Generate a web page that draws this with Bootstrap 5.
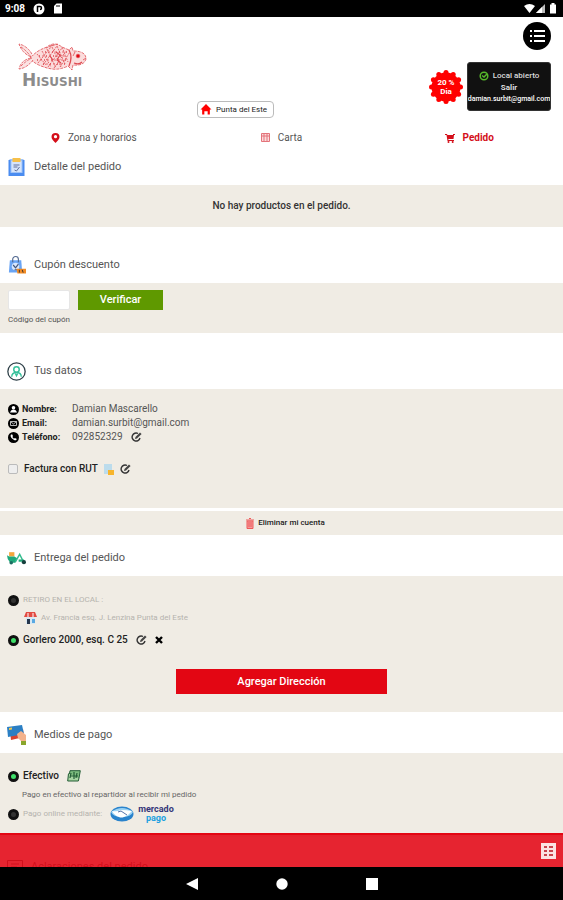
<!DOCTYPE html>
<html lang="es">
<head>
<meta charset="utf-8">
<meta name="viewport" content="width=device-width, initial-scale=1">
<title>Hisushi - Pedido</title>
<link href="https://cdn.jsdelivr.net/npm/bootstrap@5.3.0/dist/css/bootstrap.min.css" rel="stylesheet">
<style>
body{font-family:Roboto,"Liberation Sans",sans-serif;font-size:10px;line-height:14px;color:#555;background:#fff}
svg{display:block;flex:none}
a{color:inherit;text-decoration:none}
.status{height:17px;background:#000;color:#fff;font-size:10px;padding:0 5px}
.brand-col{flex:0 0 35%;padding:25px 0 0 16px}
.brand-name{font-family:"DejaVu Sans",sans-serif;font-size:17px;line-height:14px;font-weight:700;color:#8c8c8c;font-variant:small-caps;padding-left:6px}
.place{border:1px solid #bbb;border-radius:4px;font-size:8px;line-height:15px;padding:0 6px 0 2px;color:#222;background:#fff}
.tools{padding:5px 12px 7px 0}
.menu-btn{width:28px;height:28px;border-radius:50%;background:#000;border:0;padding:0}
.promo{width:34px;height:34px;position:relative;color:#fff;font-size:8px;line-height:9px;font-weight:700;text-align:center}
.promo svg{position:absolute;inset:0}
.promo span{position:relative}
.account{width:84px;height:49px;background:#111;border:1px solid #333;border-radius:3px;color:#ddd;font-size:8px;line-height:12px;padding-top:7px;overflow:hidden}
.account .mail{font-size:7px;line-height:10px;font-weight:500;color:#fff}
.tabs-row{height:31px;padding-top:8px}
.tab-on{color:#d40f1a}
.sec-title{height:36px;padding:0 7px;font-size:11px;line-height:16px;font-weight:400;margin:0;color:#555}
.panel{background:#f0ece4}
.gap-lg{margin-top:20px}
.gap-sm{margin-top:5px}
.empty-note{padding:14px 0;font-weight:500;color:#333}
.coupon{padding:7px 8px}
.coupon input{width:62px;height:20px;border:1px solid #e6e6e6;border-radius:2px;padding:0 4px}
.coupon label{font-size:8px;line-height:12px;margin-top:4px;color:#555}
.btn-check-code{width:85px;height:20px;border:0;background:#5f9900;color:#fff;font-size:11px;font-weight:500;padding:0}
.user-data{padding:13px 8px 32px}
.user-data .me-1{margin-right:3px!important}
.k{width:64px;font-size:9px;font-weight:700;color:#222}
.bold-line{font-weight:500;color:#222}
.bill{margin-top:18px;gap:6px}
.bill input{width:10px;height:10px;margin:0;appearance:none;border:1px solid #bbb;border-radius:2px;background:#eee}
.remove-row{border-top:3px solid #fff;height:27px;font-size:8px;font-weight:500;color:#222}
.delivery{padding:15px 8px 18px}
.opt{width:11px;height:11px;margin:0;appearance:none;border:3px solid #111;border-radius:50%;background:#333;flex:none}
.opt:checked{background:#3fe06a}
.faded{color:#b5b3ae;font-size:8px}
.line18{min-height:18px}
.icon-btn{border:0;background:none;padding:0}
.btn-address{width:211px;height:25px;border:0;background:#e30613;color:#fff;font-size:11px;font-weight:500;margin-top:20px;padding:0}
.pay{padding:14px 8px}
.pay-rows{gap:1px}
.note{font-size:8px;padding-left:14px;color:#666}
.pay-logo{font-size:9px;line-height:9px;font-weight:700;color:#343779;text-align:center}
.pay-logo span{display:block}
.pay-logo .second{color:#1ba0e0}
.last{margin-top:12px}
.cart-bar{height:34px;background:rgba(227,6,19,.88);border-top:2px solid #e30613;padding-right:7px}
.sys-nav{height:33px;background:#000;gap:78px}
</style>
<script src="https://cdn.jsdelivr.net/npm/bootstrap@5.3.0/dist/js/bootstrap.bundle.min.js"></script>
</head>
<body>
<svg width="0" height="0" class="position-absolute">
  <defs>
    <g id="edit"><path d="M7 1.500A4 4 0 1 0 9 6" fill="none" stroke="#333" stroke-width="1.400"/><path d="M4 7l.5-2L9 .6 10.600 2 6 6.600z" fill="#444"/></g>
  </defs>
</svg>

<div class="status d-flex align-items-center">
  <span class="fw-bold">9:08</span>
  <svg class="ms-2" width="12" height="12" viewBox="0 0 12 12"><circle cx="6" cy="6" r="5.500" fill="#fff"/><path d="M4.500 9V3.500H7A1.500 1.500 0 0 1 7 6.500" fill="none" stroke="#000" stroke-width="1.500"/></svg>
  <svg class="ms-2" width="10" height="11" viewBox="0 0 10 11"><path d="M3.500.5H9v10H1V3z" fill="#fff"/><path d="M4 2v2M6 2v2" stroke="#000"/></svg>
  <svg class="ms-auto" width="34" height="11" viewBox="0 0 34 11"><path d="M0 3q5.500-4 11 0L5.500 10z" fill="#fff"/><path d="M21 1v9H12z" fill="#bbb"/><path d="M18 4v6h-6z" fill="#fff"/><path d="M26 1.500h1.500V0h3v1.500H32v9h-6z" fill="#fff"/></svg>
</div>

<header class="d-flex">
  <div class="brand-col">
    <svg width="74" height="31" viewBox="0 0 74 31" fill="none" stroke="#de4a51" stroke-width=".8">
      <path d="M15 15C22 8 26 7 31 5Q38-1 46 5l7 3 3-3 1 4q13 0 13 8-2 7-13 6l-1 5-4-4q-8 4-16 3l-5-1-6-2q-7-3-11-7z" fill="#fbdcdc" stroke-dasharray="3 1"/>
      <path d="M15 15Q6 11 3 2q9 2 14 12M15 16Q5 18 3 27q8-1 14-9M5 5q6 4 10 10M5 24q5-5 11-8" fill="#fbe3e3" stroke-dasharray="3 1"/>
      <path d="M21 12l9 11M26 9l9 16M31 7l9 19M36 5l9 20M41 4l8 18M46 5l6 15M22 21L35 5M27 23L41 4M32 25L46 6M38 26L50 9M44 25l10-15M30 6l8-3M34 4l8-2" stroke-dasharray="2 1"/>
      <path d="M23 14h28M21 18h31M27 22h23M29 10h24" stroke-width="1.300" stroke-dasharray="1 2.500"/>
      <path d="M40 10l4 3-3 5 4 3M53 8q4 7 0 16M34 14l3 4M58 21q5 2 8-1" stroke-width="1.200"/>
      <circle cx="62" cy="14" r="1.800" fill="#e30613"/><path d="M57 14l2-4M67 18l3-2"/>
    </svg>
    <div class="brand-name">Hisushi</div>
  </div>
  <a href="#" class="place d-flex align-items-center gap-1 align-self-end"><svg width="12" height="11" viewBox="0 0 10 10"><path d="M5 0l5 5H8.500v4.500h-2V6.500h-3v3h-2V5H0z" fill="#f00"/></svg>Punta del Este</a>
  <div class="tools ms-auto d-flex flex-column align-items-end">
    <button class="menu-btn d-flex align-items-center justify-content-center" aria-label="Menú"><svg width="16" height="14" viewBox="0 0 16 14" stroke="#fff" stroke-width="2"><path d="M5 2h11M5 7h11M5 12h11M1 2h2M1 7h2M1 12h2"/></svg></button>
    <div class="d-flex align-items-center gap-1 mt-2 pt-1">
      <div class="promo d-flex align-items-center justify-content-center"><svg width="34" height="34" viewBox="-17 -17 34 34"><g fill="#f00"><circle r="14.500"/><g id="q"><circle cx="14.500" r="2.500"/><circle cx="12.600" cy="7.200" r="2.500"/><circle cx="7.200" cy="12.600" r="2.500"/></g><use href="#q" transform="rotate(90)"/><use href="#q" transform="rotate(180)"/><use href="#q" transform="rotate(270)"/></g></svg><span>20 %<br>Dia</span></div>
      <div class="account text-center">
        <div class="d-flex justify-content-center align-items-center"><svg width="10" height="10" viewBox="0 0 10 10" fill="none" stroke="#55b82a" stroke-width="1.500"><circle cx="5" cy="5" r="3.800"/><path d="M3 4.500l2 1.500 3-3"/></svg><span class="ms-1 fw-medium">Local abierto</span></div>
        <a href="#" class="d-block fw-bold">Salir</a>
        <div class="mail d-flex justify-content-center">damian.surbit@gmail.com</div>
      </div>
    </div>
  </div>
</header>

<nav class="tabs-row row g-0 text-center">
  <a href="#" class="col d-flex justify-content-center align-items-center gap-2"><svg width="9" height="10" viewBox="0 0 9 10"><path d="M4.500 0A4 4 0 0 0 .5 4c0 2 2 4 4 6 2-2 4-4 4-6a4 4 0 0 0-4-4z" fill="#d40f1a"/><circle cx="4.500" cy="3.700" r="1.600" fill="#fff"/></svg>Zona y horarios</a>
  <a href="#" class="col d-flex justify-content-center align-items-center gap-2"><svg width="9" height="9" viewBox="0 0 9 9" fill="#fbdcdc" stroke="#e4737a"><path d="M.5.5h8v8h-8zM3 1v7M6 1v7M1 3h7"/></svg>Carta</a>
  <a href="#" class="tab-on col d-flex justify-content-center align-items-center gap-2" aria-current="page"><svg width="10" height="10" viewBox="0 0 10 10" fill="#d40f1a"><path d="M0 1h2l.4 1H9L8.500 6H3.300l.2 1H9v1H2.500L1.500 2H0zM8 1h2v1H8z"/><circle cx="3.500" cy="9" r="1"/><circle cx="7.700" cy="9" r="1"/></svg><span class="fw-bold">Pedido</span></a>
</nav>

<main>
  <h2 class="sec-title d-flex align-items-center gap-2"><svg width="19" height="20" viewBox="0 0 18 20"><path d="M2 2h14v16H2z" fill="#9fc3f7"/><path d="M1 3h2v13h12V3h2v16H1z" fill="#4a8cf0"/><path d="M4 4h10v11H4z" fill="#d5e4fb"/><path d="M5 1h8v4H5z" fill="#f6c04a"/><path d="M6 8h6M6 10h4M7 13l2 1 3-4" stroke="#63719b" fill="none"/></svg>Detalle del pedido</h2>
  <section class="panel"><p class="empty-note text-center mb-0">No hay productos en el pedido.</p></section>

  <h2 class="sec-title gap-lg d-flex align-items-center gap-2"><svg width="19" height="20" viewBox="0 0 20 20"><path d="M3 5h12l1 13H2z" fill="#69a4f4"/><path d="M6 7V4a3 3 0 0 1 6 0v3" fill="none" stroke="#536a91" stroke-width="1.200"/><circle cx="9" cy="11.500" r="4" fill="#d8e7fc"/><path d="M6.500 10l2.500 3 3-4M8 15h3" stroke="#45577d" fill="none" stroke-width="1.300"/><path d="M10 14h10v5H11z" fill="#f28b24"/><path d="M13 15v3M16 15l1 3" stroke="#333"/></svg>Cupón descuento</h2>
  <section class="panel coupon">
    <div class="d-flex gap-2"><input type="text" id="code"><button class="btn-check-code">Verificar</button></div>
    <label for="code" class="d-block">Código del cupón</label>
  </section>

  <h2 class="sec-title gap-lg d-flex align-items-center gap-2"><svg width="19" height="19" viewBox="0 0 18 18" fill="none"><circle cx="9" cy="9" r="8.200" stroke="#2c3e46" stroke-width="1.200"/><circle cx="9" cy="7" r="2.600" stroke="#36c19b" stroke-width="1.400"/><path d="M4.500 14q0-4 4.500-4t4.500 4M8 11l1 2 1-2" stroke="#36c19b" stroke-width="1.300"/></svg>Tus datos</h2>
  <section class="panel">
    <div class="user-data">
      <div class="d-flex align-items-center"><div class="k d-flex align-items-center"><svg class="me-1" width="11" height="11" viewBox="0 0 11 11"><circle cx="5.500" cy="5.500" r="5.500"/><circle cx="5.500" cy="3.800" r="1.800" fill="#fff"/><path d="M2 8.500q1-3 3.500-3t3.500 3z" fill="#fff"/></svg>Nombre:</div>Damian Mascarello</div>
      <div class="d-flex align-items-center"><div class="k d-flex align-items-center"><svg class="me-1" width="11" height="11" viewBox="0 0 11 11"><circle cx="5.500" cy="5.500" r="5.500"/><path d="M2.500 3.500h6v4h-6zM2.500 3.500l3 2.500 3-2.500" fill="none" stroke="#ccc" stroke-width=".9"/></svg>Email:</div>damian.surbit@gmail.com</div>
      <div class="d-flex align-items-center"><div class="k d-flex align-items-center"><svg class="me-1" width="11" height="11" viewBox="0 0 11 11"><circle cx="5.500" cy="5.500" r="5.500"/><path d="M3 2.500l1.300 0 .7 1.700-.7.8 1.700 1.700.8-.7 1.700.8v1q-1 1-2.800 0Q2.800 6 2.500 4z" fill="#fff"/></svg>Teléfono:</div>092852329<button class="icon-btn ms-2" aria-label="Editar teléfono"><svg width="11" height="11" viewBox="0 0 11 11"><use href="#edit"/></svg></button></div>
      <div class="bill d-flex align-items-center bold-line"><input type="checkbox" id="rut"><label for="rut">Factura con RUT</label><svg width="10" height="11" viewBox="0 0 10 11"><path d="M0 0h8v10H0z" fill="#bcdcec"/><path d="M4 6h6v5H4z" fill="#f7b52c"/></svg><button class="icon-btn" aria-label="Editar factura"><svg width="11" height="11" viewBox="0 0 11 11"><use href="#edit"/></svg></button></div>
    </div>
    <div class="remove-row d-flex align-items-center justify-content-center"><a href="#" class="d-flex align-items-center ps-2"><svg class="me-1" width="8" height="11" viewBox="0 0 8 11" fill="#f59a9a" stroke="#ee5a5a"><path d="M1 3h6v7.500H1zM0 2h8M3 .5h2M3 4v5M5 4v5"/></svg>Eliminar mi cuenta</a></div>
  </section>

  <h2 class="sec-title gap-sm d-flex align-items-center gap-2"><svg width="19" height="13" viewBox="0 0 18 12"><path d="M2 0h5v4H2z" fill="#f4a63d"/><path d="M0 3l2 1h5l3 2-2 4H3q-3-3-3-7z" fill="#20a87a"/><circle cx="4" cy="10" r="1.700" fill="#1c6d62"/><path d="M8 9l4-7 3 6" fill="none" stroke="#37bd90" stroke-width="1.400"/><path d="M11 7h5l1 2h-6z" fill="#20a87a"/><circle cx="16" cy="9.500" r="2" fill="#163f3d"/></svg>Entrega del pedido</h2>
  <section class="panel delivery">
    <div class="d-flex align-items-center line18 faded"><input class="opt" type="radio" name="place" id="p1"><label class="ms-1" for="p1">RETIRO EN EL LOCAL :</label></div>
    <div class="d-flex align-items-center line18 faded ms-3"><svg class="me-1" width="13" height="12" viewBox="0 0 13 12"><path d="M2 5h9v7H2z" fill="#d8e8f2"/><path d="M2 0h9l2 5H0z" fill="#e24b42"/><path d="M4 1v4M9 1v4" stroke="#fff"/><path d="M3 7h3v5H3z" fill="#26374d"/><path d="M8 7h3v4H8z" fill="#5aa9e2"/></svg>Av. Francia esq. J. Lenzina Punta del Este</div>
    <div class="d-flex align-items-center bold-line mt-1 line18"><input class="opt" type="radio" name="place" id="p2" checked><label class="ms-1" for="p2">Gorlero 2000, esq. C 25</label><button class="icon-btn ms-2" aria-label="Editar dirección"><svg width="11" height="11" viewBox="0 0 11 11"><use href="#edit"/></svg></button><button class="icon-btn ms-2" aria-label="Borrar dirección"><svg width="8" height="8" viewBox="0 0 8 8" stroke="#000" stroke-width="2.400"><path d="M1 1l6 6M7 1L1 7"/></svg></button></div>
    <div class="text-center"><button class="btn-address">Agregar Dirección</button></div>
  </section>

  <h2 class="sec-title gap-sm d-flex align-items-center gap-2"><svg width="19" height="20" viewBox="0 0 19 20"><path d="M3 6l13-2 1 8-13 3z" fill="#d9432f"/><path d="M0 2L15 0l2 9L1 12z" fill="#2b7fc4"/><path d="M2 3l3-.5v2L2 5z" fill="#f2c84b"/><path d="M10 9l4-3 5 4v6h-5l-3-3z" fill="#f4b28c"/><path d="M14 16h5v4h-5z" fill="#8aa62b"/></svg>Medios de pago</h2>
  <section class="panel pay">
    <div class="pay-rows d-flex flex-column">
      <div class="d-flex align-items-center bold-line line18"><input class="opt" type="radio" name="pay" id="m1" checked><label class="ms-1" for="m1">Efectivo</label><svg class="ms-2" width="14" height="12" viewBox="0 0 14 12"><path d="M3 .7h10.300L12 8H1.700z" fill="#7dbb7e" stroke="#235c35"/><path d="M1.500 3.500L.7 11h10.600L12 8" fill="#a8d5a2" stroke="#235c35"/><path d="M7 2v7M4 3l-1 5M10 3L9 8M3 6h8" stroke="#235c35" stroke-width="1.200"/></svg></div>
      <div class="note line18 d-flex align-items-center">Pago en efectivo al repartidor al recibir mi pedido</div>
      <div class="d-flex align-items-center line18 faded"><input class="opt" type="radio" name="pay" id="m2"><label class="ms-1" for="m2">Pago online mediante:</label>
        <svg class="ms-2" width="24" height="16" viewBox="0 0 24 16"><ellipse cx="12" cy="8" rx="11.500" ry="7.500" fill="#2a83cc"/><path d="M1 6q11-8 22 0-2 5-11 5T1 6z" fill="#9bd3f4"/><path d="M2 5q5 1 9-1 5 0 11 1-3 4-8 6-3 1-5 0Q4 9 2 5z" fill="#fff"/><path d="M8 6l3-1 6 4" fill="none" stroke="#2a4f94" stroke-width=".8"/></svg>
        <div class="pay-logo ms-1"><span>mercado</span><span class="second">pago</span></div></div>
    </div>
  </section>

  <h2 class="sec-title last d-flex align-items-center gap-2"><svg width="16" height="14" viewBox="0 0 16 14" fill="none" stroke="#555"><path d="M.5.5h15v10H7l-3 3v-3H.5zM4 4h8M4 7h6"/></svg>Aclaraciones del pedido</h2>
</main>

<footer class="fixed-bottom">
  <div class="cart-bar d-flex align-items-center justify-content-end"><button class="icon-btn" aria-label="Ver pedido"><svg width="15" height="16" viewBox="0 0 15 16"><path d="M0 0h15v16H0z" fill="#fbe3e3"/><path d="M3 3h3v2H3zM8 3h4v2H8zM3 7h3v2H3zM8 7h4v2H8zM3 11h3v2H3zM8 11h4v2H8z" fill="#c9444c"/></svg></button></div>
  <div class="sys-nav d-flex align-items-center justify-content-center">
    <svg width="12" height="12" viewBox="0 0 12 12"><path d="M12 0v12L0 6z" fill="#fff"/></svg>
    <svg width="12" height="12" viewBox="0 0 12 12"><circle cx="6" cy="6" r="5.700" fill="#fff"/></svg>
    <svg width="12" height="12" viewBox="0 0 12 12"><path d="M0 0h12v12H0z" fill="#fff"/></svg>
  </div>
</footer>
</body>
</html>
